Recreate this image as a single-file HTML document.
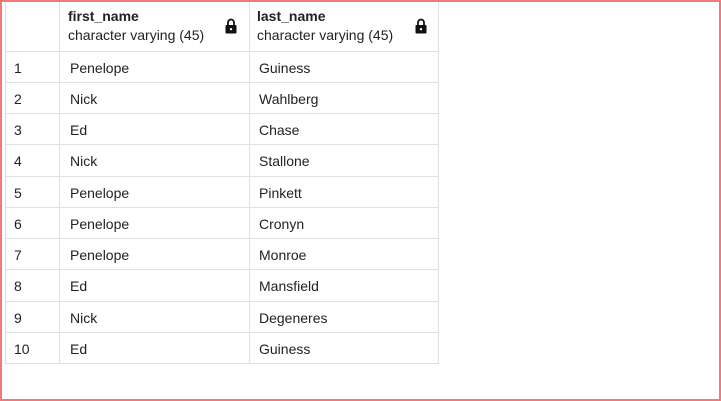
<!DOCTYPE html>
<html><head><style>
html,body{margin:0;padding:0;}
body{width:721px;height:401px;box-sizing:border-box;border:2px solid #f07a7a;background:#fff;position:relative;overflow:hidden;font-family:"Liberation Sans",Arial,sans-serif;color:#222;}
.v{position:absolute;top:0;width:1px;height:362px;background:#dde0e6;}
.h{position:absolute;left:3px;width:434px;height:1px;background:#dde0e6;}
.x{position:absolute;font-size:14px;line-height:16px;}
.t{font-weight:bold;}
.lock{position:absolute;}
</style></head><body>
<div class="v" style="left:3px"></div><div class="v" style="left:57px"></div><div class="v" style="left:247px"></div><div class="v" style="left:436px"></div>
<div class="h" style="top:49px"></div><div class="h" style="top:80px"></div><div class="h" style="top:111px"></div><div class="h" style="top:142px"></div><div class="h" style="top:174px"></div><div class="h" style="top:205px"></div><div class="h" style="top:236px"></div><div class="h" style="top:267px"></div><div class="h" style="top:299px"></div><div class="h" style="top:330px"></div><div class="h" style="top:361px"></div>
<div class="x t" style="left:66px;top:6px">first_name</div>
<div class="x" style="left:66px;top:25px">character varying (45)</div>
<div class="x t" style="left:255px;top:6px">last_name</div>
<div class="x" style="left:255px;top:25px">character varying (45)</div>
<svg class="lock" style="left:223px;top:16px" width="12" height="16" viewBox="0 0 12 16"><path d="M3 7V4.5a3 3 0 0 1 6 0V7" fill="none" stroke="#111" stroke-width="1.8"/><rect x="0.5" y="7" width="11" height="8.5" rx="1" fill="#111"/><circle cx="6" cy="11.2" r="1.2" fill="#fff"/></svg>
<svg class="lock" style="left:413px;top:16px" width="12" height="16" viewBox="0 0 12 16"><path d="M3 7V4.5a3 3 0 0 1 6 0V7" fill="none" stroke="#111" stroke-width="1.8"/><rect x="0.5" y="7" width="11" height="8.5" rx="1" fill="#111"/><circle cx="6" cy="11.2" r="1.2" fill="#fff"/></svg>
<div class="x" style="left:12px;top:58px">1</div><div class="x" style="left:68px;top:58px">Penelope</div><div class="x" style="left:257px;top:58px">Guiness</div>
<div class="x" style="left:12px;top:89px">2</div><div class="x" style="left:68px;top:89px">Nick</div><div class="x" style="left:257px;top:89px">Wahlberg</div>
<div class="x" style="left:12px;top:120px">3</div><div class="x" style="left:68px;top:120px">Ed</div><div class="x" style="left:257px;top:120px">Chase</div>
<div class="x" style="left:12px;top:151px">4</div><div class="x" style="left:68px;top:151px">Nick</div><div class="x" style="left:257px;top:151px">Stallone</div>
<div class="x" style="left:12px;top:183px">5</div><div class="x" style="left:68px;top:183px">Penelope</div><div class="x" style="left:257px;top:183px">Pinkett</div>
<div class="x" style="left:12px;top:214px">6</div><div class="x" style="left:68px;top:214px">Penelope</div><div class="x" style="left:257px;top:214px">Cronyn</div>
<div class="x" style="left:12px;top:245px">7</div><div class="x" style="left:68px;top:245px">Penelope</div><div class="x" style="left:257px;top:245px">Monroe</div>
<div class="x" style="left:12px;top:276px">8</div><div class="x" style="left:68px;top:276px">Ed</div><div class="x" style="left:257px;top:276px">Mansfield</div>
<div class="x" style="left:12px;top:308px">9</div><div class="x" style="left:68px;top:308px">Nick</div><div class="x" style="left:257px;top:308px">Degeneres</div>
<div class="x" style="left:12px;top:339px">10</div><div class="x" style="left:68px;top:339px">Ed</div><div class="x" style="left:257px;top:339px">Guiness</div>
</body></html>
